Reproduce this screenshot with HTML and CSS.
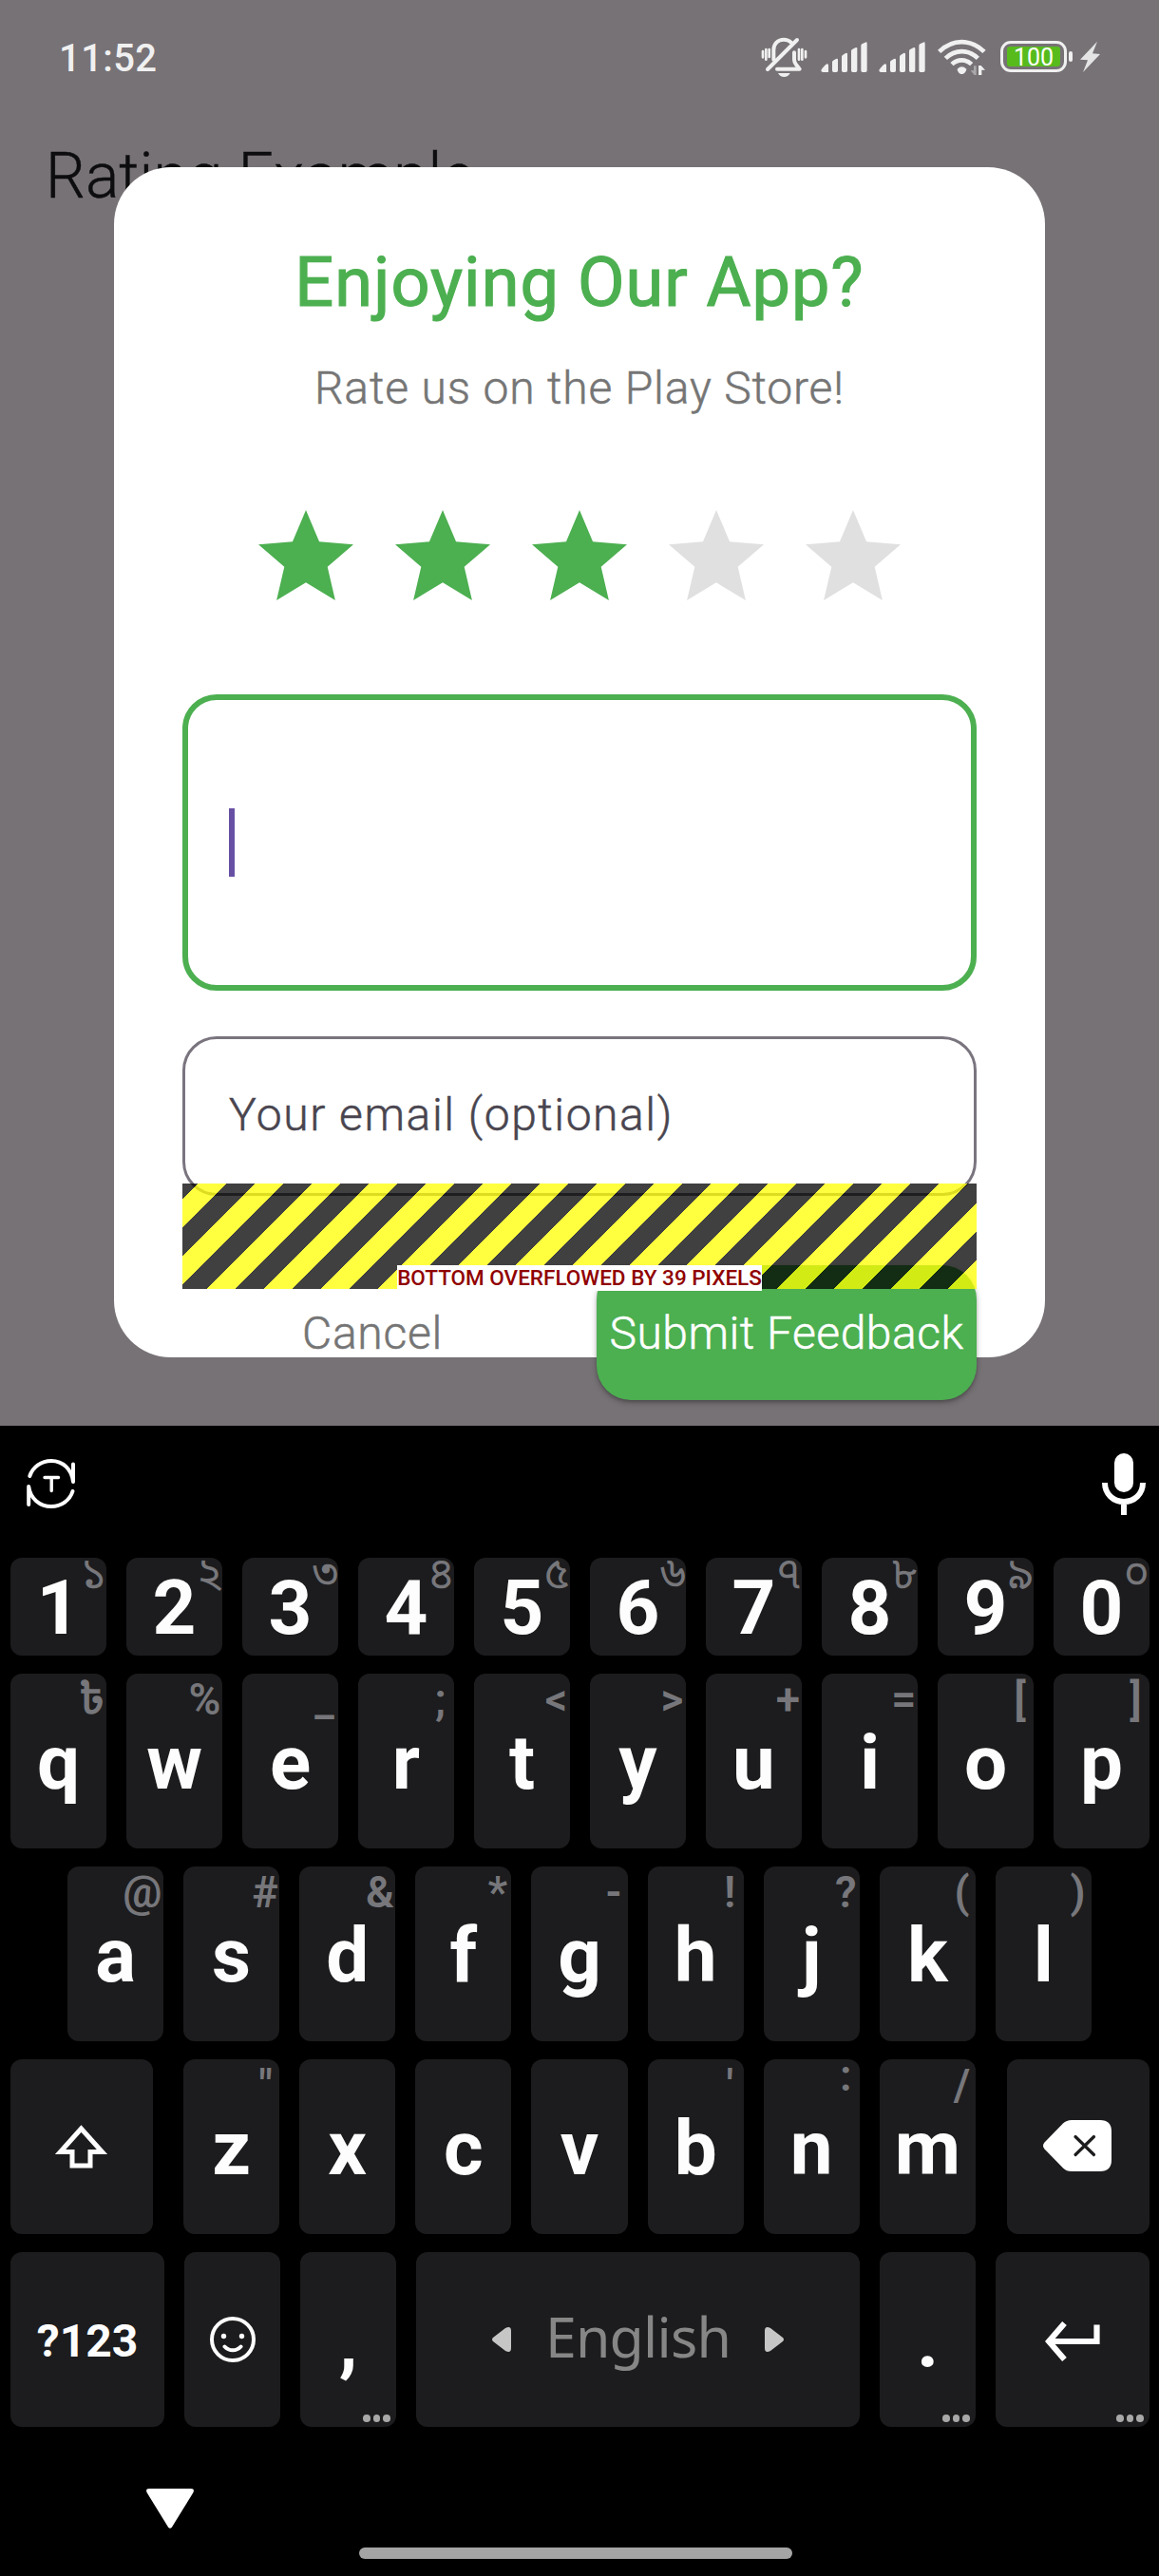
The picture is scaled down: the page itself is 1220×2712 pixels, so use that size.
FILE: index.html
```html
<!DOCTYPE html>
<html lang="en">
<head>
<meta charset="utf-8">
<title>Rating Example</title>
<link rel="stylesheet" href="styles.css">
</head>
<body>
<div class="screen">
  <main class="app">
    <div class="status-bar">
      <span class="clock">11:52</span>
      <div class="status-icons">
        <svg class="i-bell" viewBox="60 54 156 144" fill="none" stroke="#f0f0f0" stroke-linecap="round" stroke-linejoin="round">
          <path stroke-width="12" d="M103 128V98c0-20 14-33 32-33 9 0 17 3 23 9M84 159l93-93"/>
          <path stroke-width="12" d="M168 106v22c0 8 3 12 6 16l11 14H114"/>
          <path stroke-width="8" d="M69 102v19M79 96v32M89 96v24M183 96v32M193 96v32M204 102v19"/>
          <path fill="#f0f0f0" stroke="none" d="M117 171h38c-4 8-11 12-19 12s-15-4-19-12z"/>
        </svg>
        <svg class="i-signal" viewBox="252 54 147 144" fill="#f0f0f0">
          <path d="M253 163c0-4 14-20 19-21q4 0 4 4v22h-17q-6 0-6-5zM288 136q0-3 3-5l9-5q6-3 6 3v34q0 5-5 5h-8q-5 0-5-5zM318 119q0-3 3-5l9-6q6-3 6 3v52q0 5-5 5h-8q-5 0-5-5zM348 101q0-3 3-5l10-5q6-3 6 3v69q0 5-5 5h-9q-5 0-5-5zM379 84q0-3 3-5l10-5q6-3 6 3v86q0 5-5 5h-9q-5 0-5-5z"/>
        </svg>
        <svg class="i-signal" viewBox="252 54 147 144" fill="#f0f0f0">
          <path d="M253 163c0-4 14-20 19-21q4 0 4 4v22h-17q-6 0-6-5zM288 136q0-3 3-5l9-5q6-3 6 3v34q0 5-5 5h-8q-5 0-5-5zM318 119q0-3 3-5l9-6q6-3 6 3v52q0 5-5 5h-8q-5 0-5-5zM348 101q0-3 3-5l10-5q6-3 6 3v69q0 5-5 5h-9q-5 0-5-5zM379 84q0-3 3-5l10-5q6-3 6 3v86q0 5-5 5h-9q-5 0-5-5z"/>
        </svg>
        <svg class="i-wifi" viewBox="618 54 156 144" fill="none" stroke="#f0f0f0">
          <path stroke-width="14" d="M626 103C668 62 726 62 768 103M646 124C676 95 718 95 748 124M666 143C684 126 710 126 728 143"/>
          <path fill="#f0f0f0" stroke="none" d="M683 158q14-14 29 0c0 6-7 16-15 16s-14-10-14-16z"/>
          <path fill="#aaa8aa" stroke="none" d="M735 148h8v29h-6l-12-14h10z"/>
          <path fill="#f0f0f0" stroke="none" d="M750 147h8l13 14h-11v16h-10z"/>
        </svg>
        <div class="battery"><span class="level">100</span></div>
        <i class="battery-tip"></i>
        <svg class="i-bolt" viewBox="1071 54 63 144" fill="#e4e4e4"><path d="M1125 71l-54 57 24 2-15 38 54-57-24-2z"/></svg>
      </div>
    </div>
    <h1 class="app-title">Rating Example</h1>
  </main>

  <section class="dialog">
    <h2 class="dialog-title">Enjoying Our App?</h2>
    <p class="dialog-sub">Rate us on the Play Store!</p>
    <div class="stars">
      <svg class="star on" viewBox="0 0 24 24"><path d="M12 17.27L18.18 21l-1.64-7.03L22 9.24l-7.19-.61L12 2 9.19 8.63 2 9.24l5.46 4.73L5.82 21z"/></svg>
      <svg class="star on" viewBox="0 0 24 24"><path d="M12 17.27L18.18 21l-1.64-7.03L22 9.24l-7.19-.61L12 2 9.19 8.63 2 9.24l5.46 4.73L5.82 21z"/></svg>
      <svg class="star on" viewBox="0 0 24 24"><path d="M12 17.27L18.18 21l-1.64-7.03L22 9.24l-7.19-.61L12 2 9.19 8.63 2 9.24l5.46 4.73L5.82 21z"/></svg>
      <svg class="star" viewBox="0 0 24 24"><path d="M12 17.27L18.18 21l-1.64-7.03L22 9.24l-7.19-.61L12 2 9.19 8.63 2 9.24l5.46 4.73L5.82 21z"/></svg>
      <svg class="star" viewBox="0 0 24 24"><path d="M12 17.27L18.18 21l-1.64-7.03L22 9.24l-7.19-.61L12 2 9.19 8.63 2 9.24l5.46 4.73L5.82 21z"/></svg>
    </div>
    <div class="feedback-field"><i class="caret"></i></div>
    <div class="email-field">Your email (optional)</div>
    <div class="actions">
      <span class="cancel">Cancel</span>
      <span class="submit">Submit Feedback</span>
    </div>
    <div class="overflow-stripes"><span class="overflow-label">BOTTOM OVERFLOWED BY 39 PIXELS</span></div>
  </section>

  <section class="keyboard">
    <div class="toolbar">
      <svg class="i-convert" viewBox="0 0 52 52" fill="none" stroke="#fff" stroke-width="4" stroke-linecap="round" stroke-linejoin="round">
        <path d="M3.300 18C6.500 8.500 15.500 2 26 2c12.500 0 21.500 9 23 22V5.500M48.500 34C45.500 43.500 36.500 50 26 50 13.500 50 4 41.500 2.200 29v19"/>
        <path stroke-width="3.400" d="M19 19.500h14.500M26.200 19.500v14"/>
      </svg>
      <svg class="i-mic" viewBox="0 0 46 66"><rect x="13" y="0" width="20" height="41" rx="10" fill="#fff"/><path d="M3 31c0 12 9 20 20 20s20-8 20-20M23 51v14" fill="none" stroke="#fff" stroke-width="6"/></svg>
    </div>
    <div class="row digits">
      <div class="key">1<span class="hint">১</span></div>
      <div class="key">2<span class="hint">২</span></div>
      <div class="key">3<span class="hint">৩</span></div>
      <div class="key">4<span class="hint">৪</span></div>
      <div class="key">5<span class="hint">৫</span></div>
      <div class="key">6<span class="hint">৬</span></div>
      <div class="key">7<span class="hint">৭</span></div>
      <div class="key">8<span class="hint">৮</span></div>
      <div class="key">9<span class="hint">৯</span></div>
      <div class="key">0<span class="hint">০</span></div>
    </div>
    <div class="row">
      <div class="key">q<span class="hint">৳</span></div>
      <div class="key">w<span class="hint">%</span></div>
      <div class="key">e<span class="hint">_</span></div>
      <div class="key">r<span class="hint">;</span></div>
      <div class="key">t<span class="hint">&lt;</span></div>
      <div class="key">y<span class="hint">&gt;</span></div>
      <div class="key">u<span class="hint">+</span></div>
      <div class="key">i<span class="hint">=</span></div>
      <div class="key">o<span class="hint">[</span></div>
      <div class="key">p<span class="hint">]</span></div>
    </div>
    <div class="row home">
      <div class="key">a<span class="hint">@</span></div>
      <div class="key">s<span class="hint">#</span></div>
      <div class="key">d<span class="hint">&amp;</span></div>
      <div class="key">f<span class="hint">*</span></div>
      <div class="key">g<span class="hint">-</span></div>
      <div class="key">h<span class="hint">!</span></div>
      <div class="key">j<span class="hint">?</span></div>
      <div class="key">k<span class="hint">(</span></div>
      <div class="key">l<span class="hint">)</span></div>
    </div>
    <div class="row">
      <div class="key shift"><svg class="i-shift" viewBox="0 0 58 46" fill="none" stroke="#fff" stroke-width="5"><path d="M28.500 4L6.500 28.500h12.500v14.500h19V28.500h12.500z"/></svg></div>
      <div class="key">z<span class="hint">"</span></div>
      <div class="key">x</div>
      <div class="key">c</div>
      <div class="key">v</div>
      <div class="key">b<span class="hint">'</span></div>
      <div class="key">n<span class="hint raised">:</span></div>
      <div class="key">m<span class="hint">/</span></div>
      <div class="key backspace"><svg class="i-back" viewBox="0 0 72 54"><path fill="#fff" d="M1.500 23.500L21 3.500Q24.500 0 30 0h30q12 0 12 12v30q0 12-12 12H30q-5.500 0-9-3.500L1.500 30.500q-3-3.500 0-7z"/><path fill="none" stroke="#1c1c1e" stroke-width="3.200" stroke-linecap="round" d="M34 17.500l19.500 19M53.500 17.500L34 36.500"/></svg></div>
    </div>
    <div class="row bottom">
      <div class="key symbols">?123</div>
      <div class="key"><svg class="i-smile" viewBox="0 0 48 48" fill="none" stroke="#fff"><circle cx="24" cy="24" r="22" stroke-width="4"/><path d="M15.500 31.500c4.500 5 12.500 5 17 0" stroke-width="4" stroke-linecap="round"/><circle cx="14.500" cy="20.500" r="2.700" fill="#fff" stroke="none"/><circle cx="33.500" cy="20.500" r="2.700" fill="#fff" stroke="none"/></svg></div>
      <div class="key">,<i class="more"><b></b><b></b><b></b></i></div>
      <div class="key space">
        <svg class="i-tri" viewBox="0 0 20 26"><path fill="#c6c6c6" d="M1 11L14 1q6-3 6 3v18q0 6-6 3L1 15q-2-2 0-4z"/></svg>
        <span class="lang">English</span>
        <svg class="i-tri flip" viewBox="0 0 20 26"><path fill="#c6c6c6" d="M1 11L14 1q6-3 6 3v18q0 6-6 3L1 15q-2-2 0-4z"/></svg>
      </div>
      <div class="key">.<i class="more"><b></b><b></b><b></b></i></div>
      <div class="key enter"><svg class="i-enter" viewBox="0 0 58 42" fill="none" stroke="#fff" stroke-width="6.200"><path d="M54.500 3.500V21H5M20.500 2L4 21l16.500 19"/></svg><i class="more"><b></b><b></b><b></b></i></div>
    </div>
    <div class="nav">
      <svg class="i-hide" viewBox="0 0 50 42"><path fill="#fff" d="M3 0h44q4 0 2.500 4L27 40.500q-2 2.500-4 0L.5 4Q-1 0 3 0z"/></svg>
      <i class="home-bar"></i>
    </div>
  </section>
</div>
</body>
</html>
```
FILE: styles.css
```css
* { box-sizing: border-box; margin: 0; padding: 0; }
body { font-family: Roboto, "Noto Sans", "Noto Sans Bengali", sans-serif; background: #000; }
svg { display: block; flex: none; }
.screen { position: relative; width: 1220px; height: 2712px; display: flex; flex-direction: column; overflow: hidden; }

/* app behind the barrier */
.app { height: 1501px; background: #777276; flex: none; }
.status-bar { height: 124px; padding: 0 62px; display: flex; justify-content: space-between; align-items: center; }
.clock { font-size: 40px; line-height: 48px; font-weight: 500; letter-spacing: 0.4px; color: #f0f0f0; }
.status-icons { display: flex; align-items: center; height: 48px; }
.i-bell { width: 52px; height: 48px; margin-right: 12px; }
.i-signal { width: 49px; height: 48px; margin-right: 12px; }
.i-wifi { width: 52px; height: 48px; margin-right: 15px; }
.battery { width: 70px; height: 33px; margin-top: -5px; border: 3.500px solid #f0f0f0; border-radius: 11px; padding: 3px 4px; display: flex; }
.level { flex: 1; border-radius: 3px; background: #57bb1c; color: #fff; font-size: 25px; line-height: 23px; text-align: center; }
.battery-tip { width: 4px; height: 11px; margin: -5px 8px 0 2px; border-radius: 2px; background: #f0f0f0; }
.i-bolt { width: 21px; height: 48px; }
.app-title { margin: 22px 0 0 48px; font-size: 66px; line-height: 80px; font-weight: 300; -webkit-text-stroke: 0.400px; color: #0d0d0f; }

/* dialog */
.dialog { position: absolute; left: 120px; top: 176px; width: 980px; height: 1253px; padding: 72px; border-radius: 60px; background: #fff; }
.dialog-title { font-size: 72px; line-height: 100px; font-weight: 400; -webkit-text-stroke: 1.200px; letter-spacing: 1.050px; text-align: center; color: #4caf50; }
.dialog-sub { margin-top: 25px; font-size: 48px; line-height: 72px; font-weight: 300; -webkit-text-stroke: 0.500px; letter-spacing: 0.850px; text-align: center; color: #757575; }
.stars { margin-top: 82px; display: flex; justify-content: center; gap: 24px; }
.star { width: 120px; height: 120px; fill: #e0e0e0; }
.star.on { fill: #4caf50; }
.feedback-field { margin-top: 84px; height: 312px; border: 6px solid #4caf50; border-radius: 36px; padding-left: 43px; display: flex; align-items: center; }
.caret { width: 6px; height: 72px; background: #6750a4; }
.email-field { margin-top: 48px; height: 168px; border: 3px solid #79747e; border-radius: 36px; padding: 0 46px 3px; display: flex; align-items: center; font-size: 48px; font-weight: 300; -webkit-text-stroke: 0.500px; letter-spacing: 1.550px; color: #49454f; }
.actions { margin-top: 73px; height: 142px; display: flex; gap: 36px; font-size: 48px; font-weight: 300; -webkit-text-stroke: 0.500px; line-height: 143px; text-align: center; letter-spacing: 0.500px; }
.cancel { flex: 1; color: #757575; letter-spacing: 0.700px; }
.submit { flex: 1; border-radius: 36px; background: #4caf50; color: #fff; box-shadow: 0 3px 6px rgba(0,0,0,.25), 0 2px 3px rgba(0,0,0,.15); }
.overflow-stripes { position: absolute; left: 72px; top: 1070px; width: 836px; height: 111px; display: flex; justify-content: center; align-items: flex-end;
  background: repeating-linear-gradient(135deg, rgba(0,0,0,.75) 0 12.020px, rgba(255,255,0,.75) 12.020px 33.230px, rgba(0,0,0,.75) 33.230px 42.426px); }
.overflow-label { height: 27px; margin-bottom: -2px; background: #fff; color: #900000; font-size: 22.500px; line-height: 26px; font-weight: 500; white-space: nowrap; }

/* keyboard */
.keyboard { flex: 1; background: #000; display: flex; flex-direction: column; }
.toolbar { height: 139px; padding: 0 14px 0 28px; display: flex; justify-content: space-between; align-items: center; }
.i-convert { width: 52px; height: 52px; margin-bottom: 18px; }
.i-mic { width: 46px; height: 66px; margin-bottom: 16px; }
.row { height: 184px; margin-bottom: 19px; padding: 0 10px 0 11px; display: flex; gap: 21px; }
.row.digits { height: 103px; }
.row.home { padding: 0 71px; }
.row.bottom { justify-content: space-between; gap: 0; margin-bottom: 0; }
.key { position: relative; flex: 1; border-radius: 12px; padding-top: 3px; background: #1c1c1e; color: #fdfdfd; font-size: 80px; line-height: 80px; font-weight: 700; display: flex; align-items: center; justify-content: center; }
.bottom .key { flex: none; width: 101px; }
.hint { position: absolute; right: 1.500px; top: 4px; min-width: 26px; text-align: center; font-size: 46px; line-height: 46px; font-weight: 600; color: #77777b; }
.hint.raised { top: -6px; }
.digits .hint { right: 0; top: -7px; font-size: 46px; line-height: 46px; font-weight: 400; }
.key.shift { flex: none; width: 150px; margin-right: 11px; padding: 0; }
.i-shift { width: 58px; height: 46px; }
.key.backspace { flex: none; width: 150px; margin-left: 12px; padding: 0 2px 2px 0; }
.i-back { width: 72px; height: 54px; }
.bottom .symbols { width: 162px; font-size: 48px; }
.i-smile { width: 48px; height: 48px; margin-bottom: 3px; }
.bottom .space { width: 467px; gap: 36px; padding: 0; }
.lang { font-family: "Noto Sans", sans-serif; font-size: 59px; line-height: 60px; font-weight: 400; letter-spacing: -0.800px; color: #868686; padding-bottom: 8px; }
.i-tri { width: 20px; height: 26px; margin-bottom: 1px; }
.i-tri.flip { transform: scaleX(-1); }
.bottom .enter { width: 162px; padding-top: 4px; }
.i-enter { width: 58px; height: 42px; }
.more { position: absolute; right: 6px; bottom: 5px; display: flex; gap: 3px; }
.more b { width: 7.600px; height: 7.600px; border-radius: 50%; background: #a8a8a8; }
.nav { flex: 1; display: grid; grid-template-rows: 65px 62px auto; }
.i-hide { grid-row: 2; width: 50px; height: 42px; margin-left: 154px; }
.home-bar { grid-row: 3; width: 456px; height: 12px; margin: 0 auto 0 378px; border-radius: 6px; background: #a5a5a5; }
```
